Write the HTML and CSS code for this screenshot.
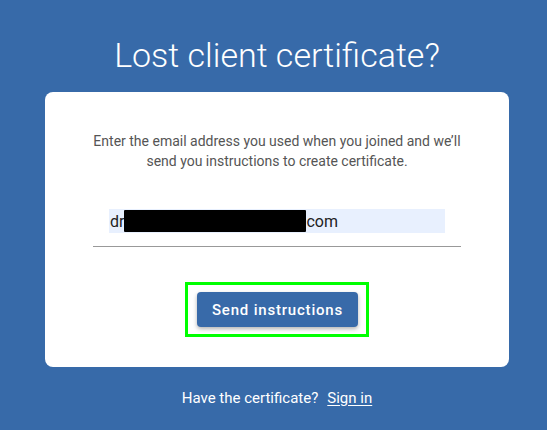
FILE: index.html
```html
<!DOCTYPE html>
<html lang="en">
<head>
<meta charset="utf-8">
<title>Lost client certificate?</title>
<link rel="stylesheet" href="styles.css">
</head>
<body>
<main class="page">
  <h1 class="title">Lost client certificate?</h1>
  <section class="card">
    <p class="intro">Enter the email address you used when you joined and we’ll send you instructions to create certificate.</p>
    <div class="field">
      <div class="input"><span class="val">dr</span><span class="redact"></span><span class="val">com</span></div>
    </div>
    <div class="actions">
      <div class="highlight">
        <button class="btn" type="button">Send instructions</button>
      </div>
    </div>
  </section>
  <p class="footer">Have the certificate?<a class="link" href="#">Sign in</a></p>
</main>
</body>
</html>
```
FILE: styles.css
```css
html, body {
  margin: 0;
  padding: 0;
  background: #376aa9;
  height: 100%;
}
body {
  font-family: Roboto, "Liberation Sans", sans-serif;
}
.page {
  display: flex;
  flex-direction: column;
  align-items: center;
  padding-left: 7px;
}
.title {
  margin: 0;
  padding-top: 35px;
  font-size: 34px;
  line-height: 40px;
  font-weight: 300;
  color: #fff;
}
.card {
  margin-top: 17px;
  width: 464px;
  height: 275px;
  box-sizing: border-box;
  background: #fff;
  border-radius: 8px;
  padding: 39px 48px 0;
  display: flex;
  flex-direction: column;
  align-items: center;
}
.intro {
  margin: 0;
  font-size: 14px;
  line-height: 20px;
  color: #555;
  text-align: center;
}
.field {
  margin-top: 38px;
  width: 368px;
  box-sizing: border-box;
  padding: 0 16px 13px;
  border-bottom: 1px solid #999;
}
.input {
  height: 24px;
  background: #e8f0fe;
  display: flex;
  align-items: center;
  font-size: 16px;
  color: #222;
  padding-left: 1px;
}
.redact {
  display: inline-block;
  width: 182px;
  height: 22px;
  background: #000;
  border-radius: 1px;
}
.actions {
  margin-top: 35px;
}
.highlight {
  border: 3px solid #00ff00;
  padding: 7px 8px 7px 9px;
}
.btn {
  display: block;
  width: 161px;
  height: 35px;
  border: 0;
  border-radius: 4px;
  background: #386aa9;
  color: #fff;
  font-family: Roboto, "Liberation Sans", sans-serif;
  font-size: 15px;
  font-weight: 500;
  letter-spacing: 0.8px;
  box-shadow: 0 2px 4px rgba(0, 0, 0, 0.3);
  padding: 0;
}
.footer {
  margin: 22px 0 0;
  font-size: 15px;
  line-height: 18px;
  color: #fff;
}
.link {
  color: #fff;
  margin-left: 9px;
  text-decoration: underline;
  text-underline-offset: 2px;
}
```
